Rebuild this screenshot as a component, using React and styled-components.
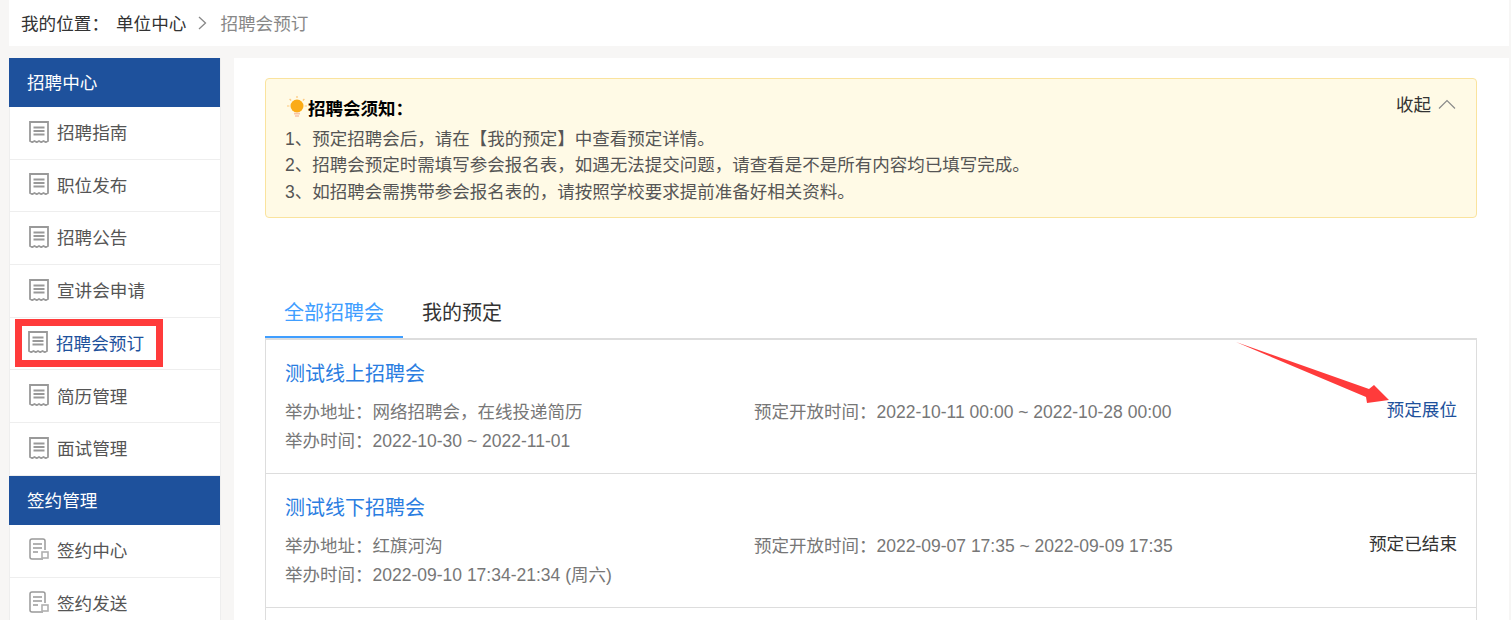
import styled, { createGlobalStyle } from "styled-components"

const GlobalStyle = createGlobalStyle`
  html, body {
    margin: 0;
    height: 620px;
    overflow: hidden;
    background: #f7f6f5;
    font-family: "Liberation Sans", "Noto Sans CJK SC", sans-serif;
  }
  * { box-sizing: border-box; }
`

const menuGroups = [
  {
    title: "招聘中心",
    items: ["招聘指南", "职位发布", "招聘公告", "宣讲会申请", "招聘会预订", "简历管理", "面试管理"],
    icon: "receipt",
  },
  { title: "签约管理", items: ["签约中心", "签约发送"], icon: "doc" },
]

const notices = [
  "1、预定招聘会后，请在【我的预定】中查看预定详情。",
  "2、招聘会预定时需填写参会报名表，如遇无法提交问题，请查看是不是所有内容均已填写完成。",
  "3、如招聘会需携带参会报名表的，请按照学校要求提前准备好相关资料。",
]

const fairs = [
  {
    name: "测试线上招聘会",
    address: "网络招聘会，在线投递简历",
    open: "2022-10-11 00:00 ~ 2022-10-28 00:00",
    time: "2022-10-30 ~ 2022-11-01",
    action: "预定展位",
    active: true,
  },
  {
    name: "测试线下招聘会",
    address: "红旗河沟",
    open: "2022-09-07 17:35 ~ 2022-09-09 17:35",
    time: "2022-09-10 17:34-21:34 (周六)",
    action: "预定已结束",
  },
]

const ReceiptIcon = () => (
  <svg width="20" height="22" viewBox="0 0 20 22">
    <path d="M1 20V1h18v19l-2.25 1.2-2.25-1.2-2.25 1.2-2.25-1.2-2.25 1.2-2.25-1.2-2.25 1.2z" fill="#fff" stroke="#999" strokeWidth="1.8" />
    <path d="M4.5 6.5h11M4.5 10h11M4.5 13.5h11" stroke="#999" strokeWidth="2.2" />
  </svg>
)

const DocIcon = () => (
  <svg width="20" height="22" viewBox="0 0 20 22">
    <path d="M14 21H3a2 2 0 0 1-2-2V3a2 2 0 0 1 2-2h11a2 2 0 0 1 2 2v9" fill="none" stroke="#999" strokeWidth="1.5" />
    <path d="M4 6h9M4 10h9M4 14h5" stroke="#999" strokeWidth="1.5" />
    <rect x="13" y="14" width="6" height="6" fill="#fff" stroke="#b0b0b0" strokeWidth="1.6" />
  </svg>
)

const BulbIcon = () => (
  <svg width="20" height="22" viewBox="0 0 20 22">
    <path d="M10 0v2M2.6 3l1.5 1.5M17.4 3l-1.5 1.5M0 10h2.4M17.6 10H20" stroke="#fdc77b" strokeWidth="1.2" />
    <circle cx="10" cy="10" r="6.5" fill="#fbab17" />
    <path d="M7 17.6h6M8 20h4" stroke="#f8c3a6" strokeWidth="1.6" />
  </svg>
)

const ChevronUp = () => (
  <svg width="18" height="10" viewBox="0 0 18 10">
    <path d="M1 9.5 9 1.5l8 8" fill="none" stroke="#8a8a8a" strokeWidth="1.2" />
  </svg>
)

const ChevronRight = () => (
  <svg width="9" height="14" viewBox="0 0 9 14">
    <path d="M1 1l6.5 6L1 13" fill="none" stroke="#888" strokeWidth="1.3" />
  </svg>
)

const Arrow = () => (
  <ArrowSvg width="160" height="70" viewBox="0 0 160 70">
    <path d="M0 0 L133 47 L138 43 L153 58 L131 61 L130 55 Z" fill="#ff3b3b" />
  </ArrowSvg>
)

export default function App() {
  return (
    <Page>
      <GlobalStyle />
      <Breadcrumb>
        <Label>我的位置：</Label>
        <span>单位中心</span>
        <Separator>
          <ChevronRight />
        </Separator>
        <CurrentCrumb>招聘会预订</CurrentCrumb>
      </Breadcrumb>
      <Body>
        <Sidebar>
          {menuGroups.map((group) => (
            <div key={group.title}>
              <MenuTitle>{group.title}</MenuTitle>
              {group.items.map((item) => (
                <MenuItem key={item} $marked={item === "招聘会预订"}>
                  {group.icon === "receipt" ? <ReceiptIcon /> : <DocIcon />}
                  {item}
                  {item === "招聘会预订" && <RedBox />}
                </MenuItem>
              ))}
            </div>
          ))}
        </Sidebar>
        <Main>
          <Notice>
            <NoticeHead>
              <BulbIcon />
              招聘会须知：
            </NoticeHead>
            {notices.map((line) => (
              <NoticeLine key={line}>{line}</NoticeLine>
            ))}
            <Collapse>
              收起 <ChevronUp />
            </Collapse>
          </Notice>
          <Tabs>
            <Tab $active>全部招聘会</Tab>
            <Tab>我的预定</Tab>
          </Tabs>
          <FairList>
            {fairs.map((fair) => (
              <FairRow key={fair.name}>
                <FairName>{fair.name}</FairName>
                <FairInfo>
                  <span>举办地址：{fair.address}</span>
                  <span>预定开放时间：{fair.open}</span>
                  <span>举办时间：{fair.time}</span>
                </FairInfo>
                <FairAction $active={fair.active}>{fair.action}</FairAction>
                {fair.active && <Arrow />}
              </FairRow>
            ))}
          </FairList>
        </Main>
      </Body>
    </Page>
  )
}

const Page = styled.div`
  width: 1511px;
  height: 620px;
  overflow: hidden;
`

const Breadcrumb = styled.div`
  display: flex;
  align-items: center;
  width: 1500px;
  height: 46px;
  margin-left: 9px;
  padding: 0 0 2px 12px;
  background: #fff;
  font-size: 17.6px;
  color: #333;
`

const Label = styled.span`
  margin-right: 7px;
`

const Separator = styled.span`
  display: flex;
  margin: 1px 13px 0 12px;
`

const CurrentCrumb = styled.span`
  color: #888;
`

const Body = styled.div`
  display: flex;
  align-items: flex-start;
  margin-top: 12px;
  padding-left: 9px;
`

const Sidebar = styled.nav`
  width: 212px;
  flex: none;
  background: #fff;
  border-right: 1px solid #eee;
`

const MenuTitle = styled.div`
  display: flex;
  align-items: center;
  height: 49px;
  padding: 0 0 2px 18px;
  background: #1e519c;
  color: #fff;
  font-size: 17.6px;
`

const MenuItem = styled.div`
  position: relative;
  display: flex;
  align-items: center;
  gap: 8px;
  height: 52.7px;
  padding-left: ${(p) => (p.$marked ? "18px" : "19px")};
  padding-bottom: 2.5px;
  border-left: 1px solid #eee;
  border-bottom: 1px solid #eee;
  color: ${(p) => (p.$marked ? "#1e519c" : "#555")};
  font-size: 17.6px;
`

const RedBox = styled.div`
  position: absolute;
  left: 5px;
  top: 1px;
  width: 148px;
  height: 48px;
  border: 7px solid #ff3b3b;
`

const Main = styled.main`
  width: 1275px;
  height: 570px;
  margin-left: 13px;
  padding: 20px 32px 0 31px;
  background: #fff;
`

const Notice = styled.section`
  position: relative;
  height: 140px;
  padding: 16px 20px 0 19px;
  background: #fffae6;
  border: 1px solid #fae39e;
  border-radius: 4px;
  color: #555;
  font-size: 17.5px;
`

const NoticeHead = styled.div`
  display: flex;
  align-items: center;
  gap: 1px;
  height: 24px;
  margin: 0 0 7px 2px;
  color: #000;
  font-weight: 700;
`

const NoticeLine = styled.p`
  margin: 0;
  line-height: 26.3px;
`

const Collapse = styled.div`
  position: absolute;
  top: 12px;
  right: 20px;
  display: flex;
  align-items: center;
  gap: 7px;
  color: #333;
`

const Tabs = styled.div`
  display: flex;
  margin-top: 72px;
  height: 49px;
`

const Tab = styled.div`
  display: flex;
  align-items: center;
  justify-content: center;
  height: 48px;
  padding: 0 ${(p) => (p.$active ? "0" : "19px")} 4px;
  width: ${(p) => (p.$active ? "138px" : "auto")};
  color: ${(p) => (p.$active ? "#409eff" : "#333")};
  border-bottom: 2px solid ${(p) => (p.$active ? "#409eff" : "transparent")};
  font-size: 20px;
`

const FairList = styled.div`
  height: 320px;
  margin-top: -1px;
  border: 1px solid #ddd;
  border-top-width: 2px;
`

const FairRow = styled.article`
  position: relative;
  height: 134px;
  padding: 19px 19px 0 19px;
  border-bottom: 1px solid #ddd;
`

const FairName = styled.h3`
  margin: 0;
  height: 30px;
  line-height: 30px;
  font-size: 20px;
  font-weight: 400;
  color: #2a7de1;
`

const FairInfo = styled.div`
  display: grid;
  grid-template-columns: 469px 1fr;
  margin-top: 8.5px;
  color: #777;
  font-size: 17.5px;
  line-height: 29px;
  span:nth-child(2) {
    white-space: nowrap;
  }
`

const FairAction = styled.div`
  position: absolute;
  right: 19px;
  top: 55px;
  line-height: 30px;
  font-size: 17.6px;
  color: ${(p) => (p.$active ? "#1e519c" : "#333")};
`

const ArrowSvg = styled.svg`
  position: absolute;
  left: 970px;
  top: 2px;
`
